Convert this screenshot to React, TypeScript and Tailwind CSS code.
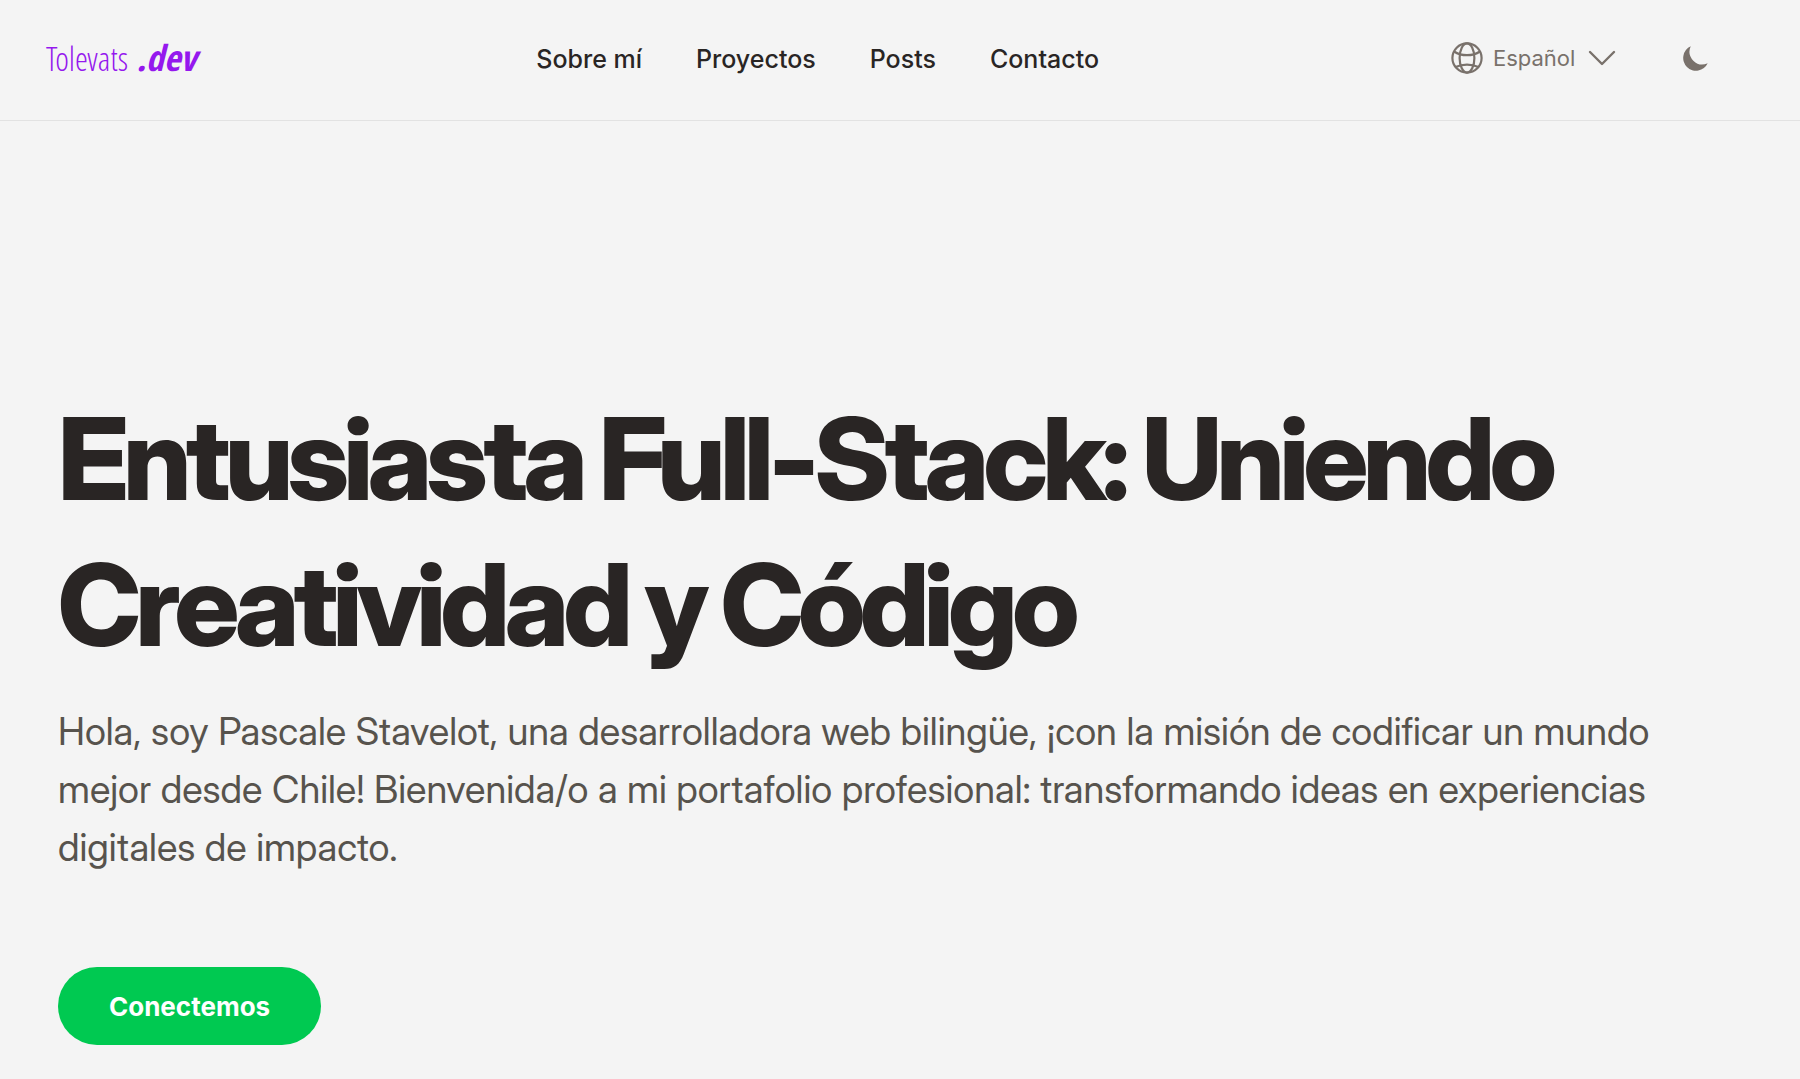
const links = [
  { label: 'Sobre mí', href: '#sobre-mi' },
  { label: 'Proyectos', href: '#proyectos' },
  { label: 'Posts', href: '#posts' },
  { label: 'Contacto', href: '#contacto' },
];

function GlobeIcon() {
  return (
    <svg viewBox="0 0 32 32" className="size-8 shrink-0" fill="none" stroke="currentColor" strokeWidth="2.2" aria-hidden="true">
      <circle cx="16" cy="16" r="14.6" />
      <ellipse cx="16" cy="16" rx="7.4" ry="14.6" />
      <path d="M3 9.500C6.800 12 11 13.200 16 13.200s9.200-1.200 13-3.700M4.600 25C8 23.400 11.800 22.600 16 22.600s8 .8 11.400 2.400" />
    </svg>
  );
}

function ChevronIcon() {
  return (
    <svg viewBox="0 0 28 16" className="pointer-events-none h-4 w-7 shrink-0" fill="none" stroke="currentColor" strokeWidth="2.4" strokeLinecap="round" strokeLinejoin="round" aria-hidden="true">
      <path d="M2 2l12 12L26 2" />
    </svg>
  );
}

function MoonIcon() {
  return (
    <svg viewBox="0 0 20 20" className="size-8" fill="currentColor" aria-hidden="true">
      <path d="M17.293 13.293A8 8 0 016.707 2.707a8.001 8.001 0 1010.586 10.586z" />
    </svg>
  );
}

export default function App() {
  return (
    <div className="min-h-screen bg-[#f4f4f4] font-['Inter',sans-serif] text-stone-800">
      <header className="flex h-[121px] items-center justify-between border-b border-[#e2e2e2] pr-[88px] pb-1 pl-[46px]">
        <a href="/" className="flex items-baseline gap-2 whitespace-nowrap text-[#9518ee]">
          <span className="font-['Open_Sans_Condensed_Light','Open_Sans',sans-serif] text-[33px] leading-10 font-light">Tolevats</span>
          <span className="font-['Open_Sans_Condensed','Open_Sans',sans-serif] text-[36px] leading-10 font-bold italic">.dev</span>
        </a>
        <nav aria-label="Principal">
          <ul className="flex gap-[54px] pt-1 text-[25px] font-medium">
            {links.map((link) => (
              <li key={link.href}>
                <a href={link.href}>{link.label}</a>
              </li>
            ))}
          </ul>
        </nav>
        <div className="flex items-center gap-16 pl-3 text-stone-500">
          <div className="flex items-center">
            <label htmlFor="idioma" aria-label="Idioma">
              <GlobeIcon />
            </label>
            <select id="idioma" className="-mr-9 appearance-none bg-transparent pr-12 pl-[10px] text-[22px]">
              <option>Español</option>
              <option>English</option>
            </select>
            <ChevronIcon />
          </div>
          <button type="button" aria-label="Modo oscuro">
            <MoonIcon />
          </button>
        </div>
      </header>
      <main className="px-[58px] pt-[265px] pb-8 font-['Inter_Display','Inter',sans-serif]">
        <h1 className="text-[114px] leading-[146px] font-extrabold tracking-tighter">
          Entusiasta Full-Stack: Uniendo Creatividad y Código
        </h1>
        <p className="mt-6 text-[38px] leading-[58px] text-stone-600">
          Hola, soy Pascale Stavelot, una desarrolladora web bilingüe, ¡con la misión de codificar un mundo mejor desde
          Chile! Bienvenida/o a mi portafolio profesional: transformando ideas en experiencias digitales de impacto.
        </p>
        <a href="#contacto" className="mt-[91px] inline-flex h-[78px] items-center rounded-full bg-[#00c951] px-[51px] font-['Inter',sans-serif] text-[26px] font-bold text-white">
          Conectemos
        </a>
      </main>
    </div>
  );
}
